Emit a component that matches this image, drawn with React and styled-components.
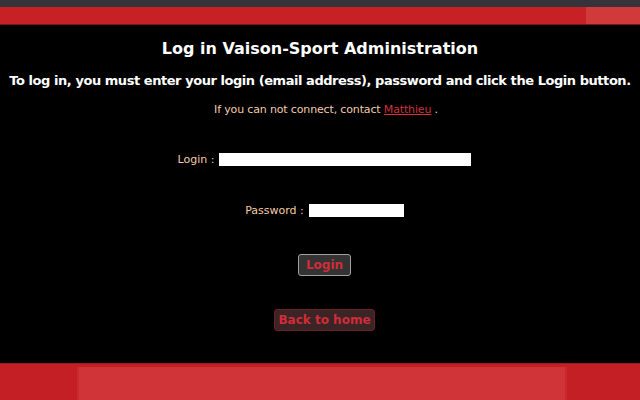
import React from 'react';
import styled, { createGlobalStyle } from 'styled-components';

const GlobalStyle = createGlobalStyle`
  html, body {
    margin: 0;
    padding: 0;
    background: #000;
  }
  body {
    font-family: "DejaVu Sans", Verdana, sans-serif;
  }
`;

const Page = styled.div`
  display: flex;
  flex-direction: column;
  width: 640px;
  height: 400px;
  background: #000;
  overflow: hidden;
`;

const TopStrip = styled.div`
  height: 7px;
  background: #34343a;
`;

const RedBar = styled.div`
  display: flex;
  height: 17px;
  background: #c72126;
  border-bottom: 1px solid #7a1418;
`;

const RedBarFill = styled.div`
  flex: 1;
`;

const RedBarEnd = styled.div`
  width: 54px;
  background: #d13a3a;
`;

const Main = styled.main`
  flex: 1;
  display: flex;
  flex-direction: column;
  align-items: center;
  padding-top: 14px;
`;

const Title = styled.h1`
  margin: 0;
  font-size: 16px;
  font-weight: bold;
  color: #fff;
`;

const Intro = styled.p`
  margin: 15px 0 0;
  font-size: 13px;
  font-weight: bold;
  letter-spacing: -0.45px;
  color: #fff;
  white-space: nowrap;
`;

const Help = styled.p`
  margin: 15px 0 0;
  padding-left: 12px;
  font-size: 11px;
  letter-spacing: -0.15px;
  color: #f3cba8;
`;

const ContactLink = styled.a`
  color: #d3303a;
  text-decoration: underline;
`;

const Form = styled.form`
  display: flex;
  flex-direction: column;
  align-items: center;
  margin-top: 37px;
  padding-left: 9px;
`;

const Field = styled.label`
  display: flex;
  align-items: center;
  gap: 5px;
  margin-bottom: ${p => p.$gap || 0}px;
  font-size: 11px;
  color: #f3cba8;
`;

const TextInput = styled.input`
  width: ${p => p.$width}px;
  height: 13px;
  padding: 0;
  border: none;
  background: #fff;
`;

const Button = styled.button`
  height: 22px;
  padding: 0 ${p => p.$pad}px;
  margin-bottom: ${p => p.$gap || 0}px;
  border: 1px solid ${p => p.$border};
  border-radius: 3px;
  background: ${p => p.$bg};
  color: #d12c38;
  font-family: "DejaVu Sans", Verdana, sans-serif;
  font-size: 12px;
  font-weight: bold;
`;

const Footer = styled.footer`
  display: flex;
  justify-content: center;
  height: 36px;
  background: #c31f25;
  border-top: 1px solid #a5181d;
`;

const FooterPanel = styled.div`
  width: 486px;
  margin-top: 3px;
  margin-left: 4px;
  background: #d03438;
  border-left: 2px solid #c92a2f;
  border-right: 2px solid #c92a2f;
`;

export default function App() {
  return (
    <Page>
      <GlobalStyle />
      <TopStrip />
      <RedBar>
        <RedBarFill />
        <RedBarEnd />
      </RedBar>
      <Main>
        <Title>Log in Vaison-Sport Administration</Title>
        <Intro>To log in, you must enter your login (email address), password and click the Login button.</Intro>
        <Help>
          If you can not connect, contact <ContactLink href="#">Matthieu</ContactLink> .
        </Help>
        <Form onSubmit={e => e.preventDefault()}>
          <Field $gap={38}>
            Login :
            <TextInput type="text" $width={252} />
          </Field>
          <Field $gap={37}>
            Password :
            <TextInput type="password" $width={95} />
          </Field>
          <Button type="submit" $pad={7} $bg="#333333" $border="#a0a0a0" $gap={33}>Login</Button>
          <Button type="button" $pad={3} $bg="#3a2426" $border="#6e1d22">Back to home</Button>
        </Form>
      </Main>
      <Footer>
        <FooterPanel />
      </Footer>
    </Page>
  );
}
